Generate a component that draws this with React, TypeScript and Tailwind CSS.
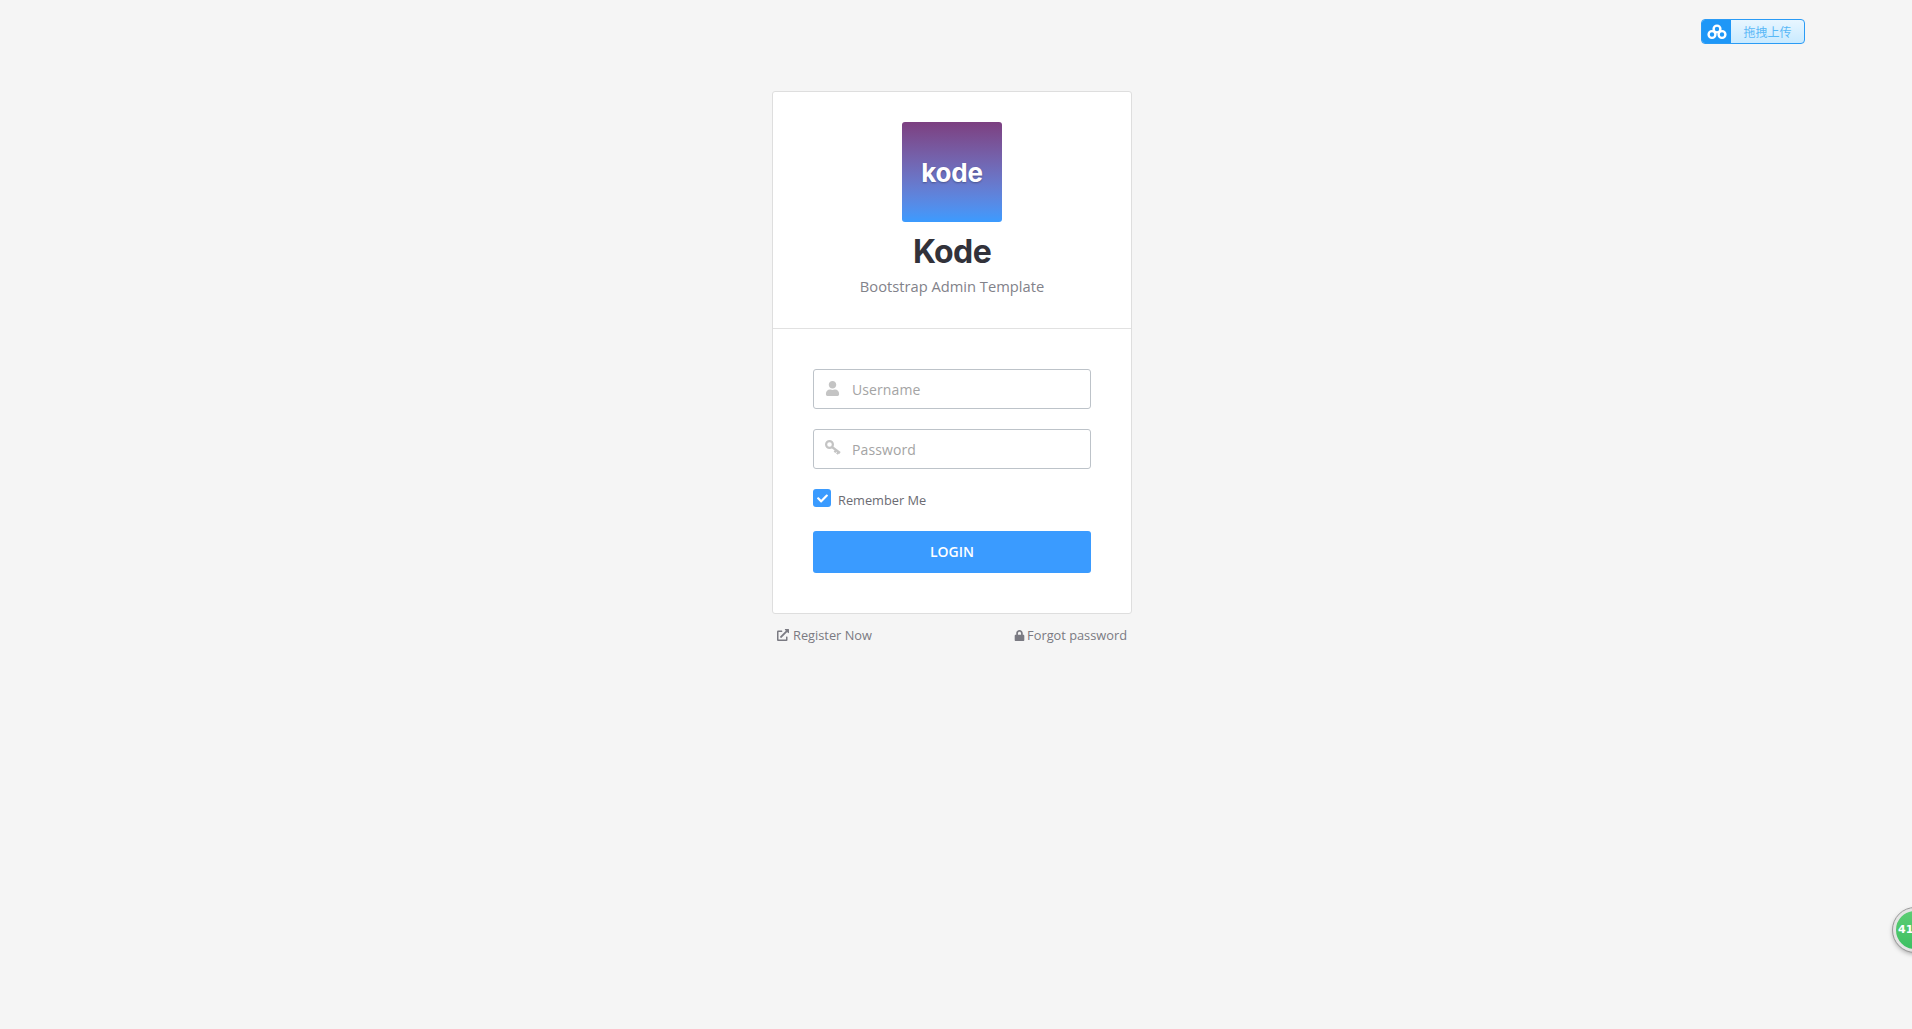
import React from "react";
import { FaUser, FaLock, FaCheck, FaExternalLinkAlt } from "react-icons/fa";

function KeyIcon() {
  return (
    <svg width="16" height="16" viewBox="0 0 16 16" className="text-[#c4c4c4]" fill="none" stroke="currentColor">
      <circle cx="4.5" cy="4.5" r="3.4" strokeWidth="2.2" />
      <path d="M7 7 L15 13 M11 10.2 L9.6 12.4 M13.4 12 L12 14.2" strokeWidth="2.2" />
    </svg>
  );
}

function Field({ icon, placeholder }: { icon: React.ReactNode; placeholder: string }) {
  return (
    <div className="flex h-10 w-full items-center rounded-[3px] border border-[#bdc3c9] bg-white">
      <span className="flex w-[38px] shrink-0 items-center pb-0.5 pl-[11px]">{icon}</span>
      <span className="mt-[2px] text-sm leading-none tracking-[0.1px] text-[#a4a4a4]">{placeholder}</span>
    </div>
  );
}

export default function App() {
  return (
    <div className="relative h-[1029px] w-[1912px] overflow-hidden bg-[#f5f5f5] pr-2 pt-[91px] font-['Open_Sans',sans-serif] text-[#6b6b72]">
      <div className="absolute left-[1701px] top-[19px] flex h-[25px] w-[104px] overflow-hidden rounded-[4px] border border-[#2a9bf5] bg-gradient-to-b from-[#e8f6ff] to-[#c9eaff]">
        <div className="flex h-full w-[29px] shrink-0 items-center justify-center bg-[#1e97f7]">
          <svg width="20" height="16" viewBox="0 0 20 16" fill="none" stroke="white" strokeWidth="2.4">
            <circle cx="10" cy="5" r="3.4" />
            <circle cx="5" cy="10.5" r="3.4" />
            <circle cx="15" cy="10.5" r="3.4" />
          </svg>
        </div>
        <div className="flex-1 text-center font-['Noto_Sans_CJK_SC',sans-serif] text-[12px] leading-[23px] text-[#59b8f7]">拖拽上传</div>
      </div>

      <div className="absolute left-[1893px] top-[908px] flex h-[44px] w-[44px] items-center rounded-full border-[3px] border-[#e4e4e4] bg-gradient-to-b from-[#5ccd74] to-[#3cc062] pl-[2px] font-['DejaVu_Sans',sans-serif] text-[11px] font-bold text-white shadow-[0_2px_5px_rgba(0,0,0,0.35)] outline outline-1 outline-[#9a9a9a]">
        41
      </div>

      <div className="mx-auto w-[360px]">
        <div className="rounded-[3px] border border-[#dedede] bg-white">
          <div className="flex h-[237px] flex-col items-center border-b border-[#e1e1e1] pt-[30px]">
            <div className="flex h-[100px] w-[100px] items-center justify-center rounded-[3px] bg-gradient-to-b from-[#7c3f80] to-[#3a9bff]">
              <span className="font-['Inter',sans-serif] text-[26px] font-bold tracking-[-0.2px] text-white [text-shadow:0_1px_2px_rgba(0,0,0,0.3)]">kode</span>
            </div>
            <div className="mt-[10px] font-['Inter',sans-serif] text-[32px] font-bold leading-[40px] tracking-[-0.6px] text-[#32323a]">Kode</div>
            <div className="mt-[4px] text-[14.7px] leading-[20px] text-[#82828a]">Bootstrap Admin Template</div>
          </div>

          <div className="p-10">
            <div className="flex flex-col gap-5">
              <Field icon={<FaUser size={15} className="text-[#c4c4c4]" />} placeholder="Username" />
              <Field icon={<KeyIcon />} placeholder="Password" />
            </div>
            <div className="mt-5 flex h-[18px] items-center gap-[7px]">
              <span className="flex h-[18px] w-[18px] items-center justify-center rounded-[3px] bg-[#3a9bff]">
                <FaCheck size={11} className="text-white" />
              </span>
              <span className="mt-[6px] text-[12.8px] text-[#6b6b72]">Remember Me</span>
            </div>
            <div className="mt-6 flex h-[42px] items-center justify-center rounded-[3px] bg-[#3a9bff] text-sm font-semibold text-white">LOGIN</div>
          </div>
        </div>

        <div className="mt-3 flex justify-between pl-[5px] pr-[5px] text-[12.8px] leading-[18px] text-[#7a7a82]">
          <span className="flex items-center gap-1"><FaExternalLinkAlt size={12} />Register Now</span>
          <span className="flex items-center gap-[2px]"><FaLock size={11} />Forgot password</span>
        </div>
      </div>
    </div>
  );
}
